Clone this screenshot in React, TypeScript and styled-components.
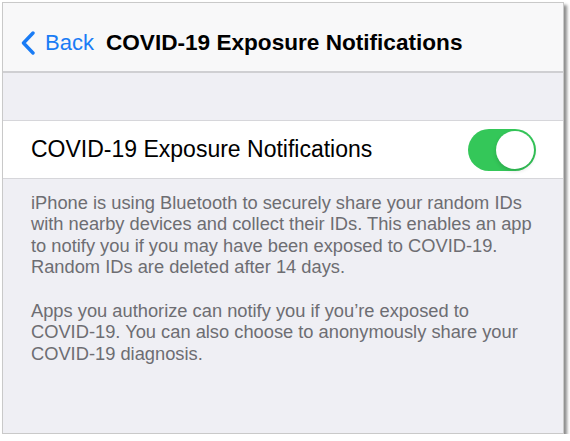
import React from "react";
import styled, { createGlobalStyle } from "styled-components";

const Global = createGlobalStyle`
  html, body { margin: 0; padding: 0; background: #ffffff; }
  body { font-family: "Liberation Sans", Arial, sans-serif; }
`;

const Frame = styled.div`
  margin: 2px 0 0 2px;
  width: 560px;
  height: 430px;
  border: 1px solid #c9c9c9;
  box-shadow: 3px 3px 3px rgba(0, 0, 0, 0.45);
  background: #efeff4;
  display: flex;
  flex-direction: column;
  overflow: hidden;
`;

const NavBar = styled.div`
  height: 56px;
  padding: 12px 0 0 18px;
  background: #f8f8f9;
  border-bottom: 2px solid #cfcfd2;
  display: flex;
  align-items: center;
  box-sizing: content-box;
`;

const BackButton = styled.div`
  display: flex;
  align-items: center;
  gap: 10px;
  color: #1a7cf5;
  font-size: 22px;
  margin-right: 12px;
`;

const Title = styled.div`
  font-weight: 700;
  font-size: 22.6px;
  color: #000;
`;

const Spacer = styled.div`
  height: 47px;
  border-bottom: 1px solid #d6d6da;
`;

const Row = styled.div`
  height: 57px;
  background: #fff;
  border-bottom: 1px solid #d6d6da;
  display: flex;
  align-items: center;
  justify-content: space-between;
  padding: 0 27px 0 28px;
`;

const RowLabel = styled.div`
  font-size: 23px;
  color: #000;
`;

const Toggle = styled.div<{ $on: boolean }>`
  width: 68px;
  height: 42px;
  border-radius: 21px;
  background: ${(p) => (p.$on ? "#34c759" : "#e5e5ea")};
  display: flex;
  align-items: center;
  justify-content: ${(p) => (p.$on ? "flex-end" : "flex-start")};
  padding: 0 2px;
  box-sizing: border-box;
`;

const Knob = styled.div`
  width: 38px;
  height: 38px;
  border-radius: 50%;
  background: #fff;
  box-shadow: 0 2px 4px rgba(0, 0, 0, 0.15);
`;

const Footer = styled.div`
  padding: 13px 10px 0 28px;
  color: #6d6d72;
  font-size: 18.3px;
  line-height: 21.3px;
  white-space: nowrap;
`;

const Paragraph = styled.p`
  margin: 0 0 23px 0;
`;

export default function App() {
  return (
    <>
      <Global />
      <Frame>
        <NavBar>
          <BackButton>
            <svg width="14" height="24" viewBox="0 0 14 24">
              <path
                d="M12 2 L2.5 12 L12 22"
                fill="none"
                stroke="#1a7cf5"
                strokeWidth="3.4"
                strokeLinecap="round"
                strokeLinejoin="round"
              />
            </svg>
            <span>Back</span>
          </BackButton>
          <Title>COVID-19 Exposure Notifications</Title>
        </NavBar>
        <Spacer />
        <Row>
          <RowLabel>COVID-19 Exposure Notifications</RowLabel>
          <Toggle $on={true}>
            <Knob />
          </Toggle>
        </Row>
        <Footer>
          <Paragraph>
            iPhone is using Bluetooth to securely share your random IDs
            <br />
            with nearby devices and collect their IDs. This enables an app
            <br />
            to notify you if you may have been exposed to COVID-19.
            <br />
            Random IDs are deleted after 14 days.
          </Paragraph>
          <Paragraph>
            Apps you authorize can notify you if you’re exposed to
            <br />
            COVID-19. You can also choose to anonymously share your
            <br />
            COVID-19 diagnosis.
          </Paragraph>
        </Footer>
      </Frame>
    </>
  );
}
